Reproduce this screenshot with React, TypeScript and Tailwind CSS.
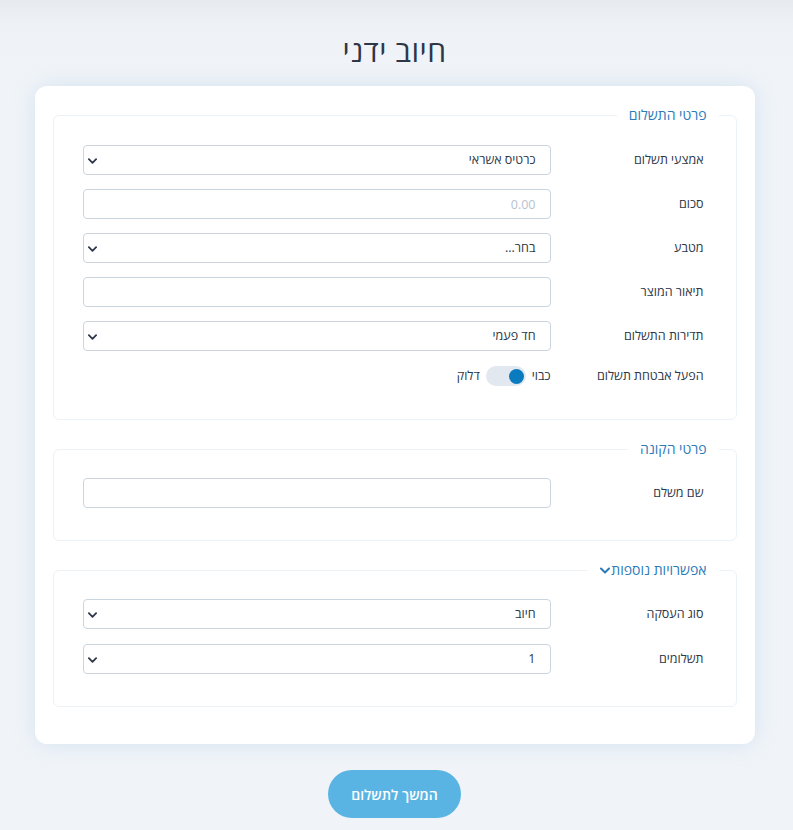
import React from 'react';

const font = { fontFamily: '"Open Sans", "Noto Sans", sans-serif' };

const Chevron: React.FC<{ className?: string }> = ({ className }) => (
  <svg viewBox="0 0 10 6" className={className} fill="none">
    <path d="M1 1l4 4 4-4" stroke="currentColor" strokeWidth="2" strokeLinecap="round" strokeLinejoin="round" />
  </svg>
);

const Select: React.FC<{ value: string }> = ({ value }) => (
  <div className="relative flex-1">
    <select
      defaultValue={value}
      className="w-full h-[30px] appearance-none rounded border border-[#cbd5e0] bg-white pr-3.5 pl-8 text-[12.5px] text-[#2d3748] outline-none"
    >
      <option>{value}</option>
    </select>
    <Chevron className="pointer-events-none absolute left-[5px] top-[13px] w-[9px] h-[6px] text-[#2d3748]" />
  </div>
);

const Input: React.FC<{ placeholder?: string }> = ({ placeholder }) => (
  <input
    placeholder={placeholder}
    className="flex-1 h-[30px] rounded border border-[#cbd5e0] bg-white px-3.5 text-[12.5px] text-[#2d3748] placeholder:text-[#b8c2cf] outline-none"
  />
);

const Row: React.FC<{ label: string; children: React.ReactNode }> = ({ label, children }) => (
  <div className="flex items-center">
    <label className="w-[153px] shrink-0 text-[12.5px] text-[#2d3748]">{label}</label>
    {children}
  </div>
);

const Section: React.FC<{ title: React.ReactNode; children: React.ReactNode; gap?: string; pt?: string; className?: string }> = ({
  title,
  children,
  gap = 'gap-[14px]',
  pt = 'pt-5',
  className = '',
}) => (
  <fieldset className={`rounded-md border border-[#edf2f7] ${className}`}>
    <legend className="mr-[17px] px-3 text-[14px] leading-5 text-[#2b7bb9]">{title}</legend>
    <div className={`flex flex-col ${gap} ${pt} pr-[32px] pl-[29px] pb-[32px]`}>{children}</div>
  </fieldset>
);

export default function App() {
  return (
    <div dir="rtl" style={font} className="min-h-screen bg-[linear-gradient(to_bottom,#e7eaee_0px,#eef2f6_24px,#f0f4f8_60px)] pb-3">
      <div className="mr-auto w-[789px]">
        <h1 className="pt-[33px] text-center text-[30px] leading-9 tracking-[0.5px] text-[#2d3748]">חיוב ידני</h1>
        <div className="mx-auto mt-[17px] w-[720px] rounded-xl bg-white px-[18px] pt-[19px] pb-[37px] shadow-[0_0_22px_rgba(120,170,215,0.22)]">
          <div className="flex flex-col">
            <Section title="פרטי התשלום">
              <Row label="אמצעי תשלום"><Select value="כרטיס אשראי" /></Row>
              <Row label="סכום"><Input placeholder="0.00" /></Row>
              <Row label="מטבע"><Select value="בחר..." /></Row>
              <Row label="תיאור המוצר"><Input /></Row>
              <Row label="תדירות התשלום"><Select value="חד פעמי" /></Row>
              <div className="flex items-center h-[22px]">
                <label className="w-[153px] shrink-0 text-[12.5px] text-[#2d3748]">הפעל אבטחת תשלום</label>
                <div className="flex items-center gap-[6px] text-[12.5px] text-[#2d3748]">
                  <span>כבוי</span>
                  <span className="flex h-[20px] w-[40px] items-center justify-start rounded-full bg-[#e2e8f0] px-[2px]">
                    <span className="h-[15px] w-[15px] rounded-full bg-[#0b7bc0]" />
                  </span>
                  <span>דלוק</span>
                </div>
              </div>
            </Section>
            <Section title="פרטי הקונה" pt="pt-[19px]" className="mt-[19px]">
              <Row label="שם משלם"><Input /></Row>
            </Section>
            <Section
              gap="gap-[15px]"
              pt="pt-[19px]"
              className="mt-[19px]"
              title={
                <span className="flex items-center gap-[1px]">
                  אפשרויות נוספות
                  <Chevron className="w-[10px] h-[7px] text-[#2b7bb9]" />
                </span>
              }
            >
              <Row label="סוג העסקה"><Select value="חיוב" /></Row>
              <Row label="תשלומים"><Select value="1" /></Row>
            </Section>
          </div>
        </div>
        <div className="mt-[26px] flex justify-center">
          <button className="h-[48px] w-[133px] rounded-full bg-[#5ab4e3] text-[14px] font-semibold text-white">
            המשך לתשלום
          </button>
        </div>
      </div>
    </div>
  );
}
